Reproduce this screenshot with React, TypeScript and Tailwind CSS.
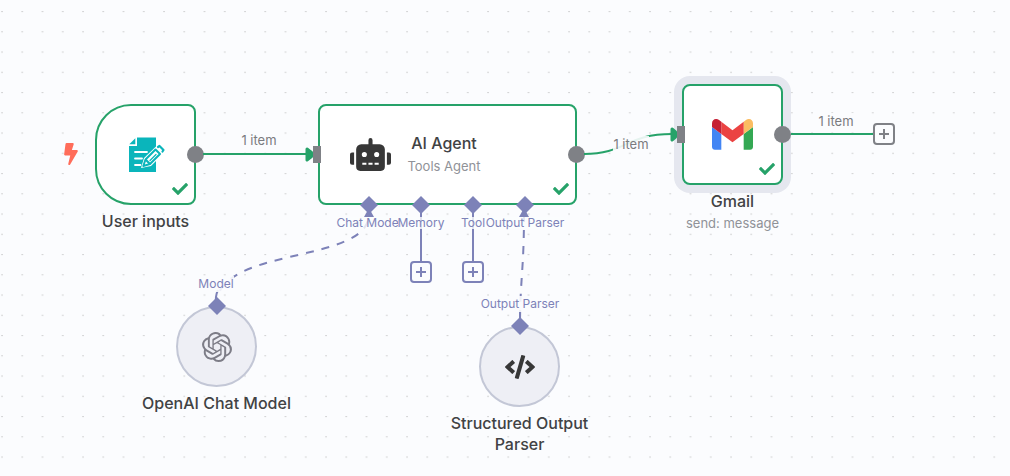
import type { ReactNode } from "react";
import { FaBolt, FaCheck, FaCode, FaRobot } from "react-icons/fa";
import { SiOpenai } from "react-icons/si";

function FormIcon() {
  return (
    <svg viewBox="0 1 40 40" className="size-10" aria-hidden="true">
      <path d="M11 3.500H30V38H3V12H11Z" fill="#0ab5bb" />
      <path d="M9.300 4.300V10.300H3.300Z" fill="#0ab5bb" />
      <path d="M9 18H21M9 24.500H16M9 31H14.500" stroke="#fff" strokeWidth="1.800" strokeLinecap="round" />
      <path d="M15 34L18 24L30 12.500H39V18L25 32Z" fill="#fff" />
      <path d="M17.300 32L19.500 25.500L29.500 15.500L34 20L24 30Z" fill="#fff" stroke="#0ab5bb" strokeWidth="2" strokeLinejoin="round" />
      <path d="M20 26L23.500 29.500M32 13L33.500 12L37.500 16L36.500 17.500" fill="none" stroke="#0ab5bb" strokeWidth="2.200" strokeLinejoin="round" strokeLinecap="round" />
      <path d="M24 26.500L30 20.500" stroke="#0ab5bb" strokeWidth="1.200" strokeLinecap="round" />
    </svg>
  );
}

function GmailIcon() {
  return (
    <svg viewBox="52 42 88 66" className="w-[41px]" aria-hidden="true">
      <path fill="#4285f4" d="M58 108h14V74L52 59v43c0 3.320 2.690 6 6 6" />
      <path fill="#34a853" d="M120 108h14c3.320 0 6-2.690 6-6V59l-20 15" />
      <path fill="#fbbd62" d="M120 48v26l20-15v-8c0-7.420-8.470-11.650-14.400-7.200" />
      <path fill="#eb4342" d="M72 74V48l24 18 24-18v26L96 92" />
      <path fill="#c62035" d="M52 51v8l20 15V48l-5.600-4.200c-5.940-4.450-14.400-.220-14.400 7.200" />
    </svg>
  );
}

function CanvasBackground() {
  return (
    <svg className="absolute inset-0 size-full" fill="none" aria-hidden="true">
      <defs>
        <pattern id="grid" x="1" y="11" width="20.250" height="20.250" patternUnits="userSpaceOnUse">
          <circle cx="1" cy="0.600" r="0.600" fill="#aaaaaa" />
        </pattern>
      </defs>
      <rect width="100%" height="100%" fill="url(#grid)" />
      <g stroke="#7d82b8" strokeWidth="2">
        <path d="M216 306C216 245 369 265 369 214" strokeDasharray="8 8" />
        <path d="M216 306Q215 296 218 290" />
        <path d="M524 214C524 270 520 280 520 326" strokeDasharray="8 8" />
        <path d="M520 326V310M421 205V262M473 205V262" />
      </g>
      <g fill="#7d82b8">
        <path d="M369 208L374 217H364Z" />
        <path d="M524 208L529 217H519Z" />
      </g>
    </svg>
  );
}

function MainConnections() {
  return (
    <svg className="pointer-events-none absolute inset-0 size-full" fill="none" aria-hidden="true">
      <g stroke="#26a269" strokeWidth="2">
        <path d="M203 154H308" />
        <path d="M584 154C626 154 626 134 672 134" />
      </g>
      <g fill="#26a269" stroke="#26a269" strokeWidth="3" strokeLinejoin="round">
        <path d="M307 149L311.500 152.500V156.500L307 160Z" />
        <path d="M672 129L675.500 132V137L672 140Z" />
      </g>
    </svg>
  );
}

interface CardProps {
  className: string;
  hasInput?: boolean;
  children: ReactNode;
}

function Card({ className, hasInput = false, children }: CardProps) {
  return (
    <div className={`relative flex h-[101px] items-center border-2 border-[#26a269] bg-white ${className}`}>
      <span className={hasInput ? "mr-1.5 -ml-[7px] h-[17px] w-2 bg-[#7f8186]" : "w-[7px]"} />
      <div className="flex flex-1 justify-center">{children}</div>
      <span className="-mr-[10px] size-[17px] rounded-full bg-[#7f8186]" />
      <FaCheck className="absolute right-1.5 bottom-1.5 size-4 text-[#26a269]" aria-label="Success" />
    </div>
  );
}

function Diamond() {
  return (
    <svg viewBox="0 0 18 18" className="relative size-[18px] shrink-0" aria-hidden="true">
      <path d="M9 0L18 9L9 18L0 9Z" fill="#7d82b8" />
    </svg>
  );
}

function Title({ children }: { children: ReactNode }) {
  return <h2 className="mt-1.5 text-center text-base leading-[21px] font-medium">{children}</h2>;
}

function SubNode({ className, title, children }: { className: string; title: string; children: ReactNode }) {
  return (
    <section className={`absolute flex w-[161px] flex-col items-center ${className}`}>
      <Diamond />
      <div className="-mt-[9px] flex size-[81px] items-center justify-center rounded-full border-2 border-[#c3c7d6] bg-[#eeeff5]">{children}</div>
      <Title>{title}</Title>
    </section>
  );
}

function AddButton({ className, label }: { className: string; label: string }) {
  return (
    <button type="button" aria-label={label} className={`size-[22px] shrink-0 rounded border-2 bg-[#fbfcfe] ${className}`}>
      <svg viewBox="0 0 18 18" aria-hidden="true">
        <path d="M9 4V14M4 9H14" stroke="currentColor" strokeWidth="2" />
      </svg>
    </button>
  );
}

function Socket({ label, addLabel }: { label: string; addLabel?: string }) {
  return (
    <li className="flex w-[52px] flex-col items-center">
      <Diamond />
      <span className="relative mt-[3px] bg-[#fbfcfe]/80 text-xs leading-3 whitespace-nowrap text-[#7d82b8]">{label}</span>
      {addLabel && <AddButton label={addLabel} className="mt-8 border-[#7d82b8] text-[#7d82b8]" />}
    </li>
  );
}

function EdgeLabel({ className, children }: { className: string; children: ReactNode }) {
  return (
    <p className={`absolute flex w-28 justify-center leading-4 ${className}`}>
      <span className="bg-[#fbfcfe]/90">{children}</span>
    </p>
  );
}

export default function App() {
  return (
    <main className="relative min-h-screen w-full overflow-hidden bg-[#fbfcfe] font-['Inter',sans-serif] text-[#414244]">
      <CanvasBackground />

      <FaBolt className="absolute top-[143px] left-[61px] h-[22px] w-5 text-[#ff6d5a]" aria-label="Trigger" />
      <section className="absolute top-[104px] left-[65px] flex w-[161px] flex-col items-center">
        <Card className="w-[101px] rounded-l-[36px] rounded-r-lg">
          <FormIcon />
        </Card>
        <Title>User inputs</Title>
      </section>

      <section className="absolute top-[104px] left-[318px] w-[259px]">
        <Card hasInput className="rounded-lg">
          <div className="flex items-center gap-4 pr-16 pb-0.5">
            <FaRobot className="mt-0.5 size-[41px] text-[#373737]" aria-hidden="true" />
            <div className="text-center">
              <h2 className="text-base leading-6 font-medium">AI Agent</h2>
              <p className="text-[13px] leading-[22px] text-[#909298]">Tools Agent</p>
            </div>
          </div>
        </Card>
        <ul className="-mt-[9px] flex pl-[25px]">
          <Socket label="Chat Model" />
          <Socket label="Memory" addLabel="Add memory" />
          <Socket label="Tool" addLabel="Add tool" />
          <Socket label="Output Parser" />
        </ul>
      </section>

      <section className="absolute top-[84px] left-[652px] flex w-[161px] flex-col items-center">
        <Card hasInput className="w-[101px] rounded-lg ring-8 ring-[#e5e7ef]">
          <GmailIcon />
        </Card>
        <Title>Gmail</Title>
        <p className="text-[13px] leading-[22px] text-[#909298]">send: message</p>
      </section>

      <div className="absolute top-[123px] left-[791px] flex items-center">
        <span className="h-0.5 w-[82px] bg-[#26a269]" />
        <AddButton label="Add next step" className="border-[#7f8186] text-[#7f8186]" />
      </div>

      <SubNode title="OpenAI Chat Model" className="top-[297px] left-[136px]">
        <SiOpenai className="size-[30px] text-[#7d7d87]" aria-hidden="true" />
      </SubNode>
      <SubNode title="Structured Output Parser" className="top-[317px] left-[439px]">
        <FaCode className="size-[30px] text-[#373737]" aria-hidden="true" />
      </SubNode>

      <MainConnections />
      <EdgeLabel className="top-[132px] left-[203px] text-[13px] text-[#7a7b80]">1 item</EdgeLabel>
      <EdgeLabel className="top-[136px] left-[575px] text-[13px] text-[#7a7b80]">1 item</EdgeLabel>
      <EdgeLabel className="top-[113px] left-[780px] text-[13px] text-[#7a7b80]">1 item</EdgeLabel>
      <EdgeLabel className="top-[276px] left-[160px] text-xs text-[#7d82b8]">Model</EdgeLabel>
      <EdgeLabel className="top-[296px] left-[464px] text-xs text-[#7d82b8]">Output Parser</EdgeLabel>
    </main>
  );
}
